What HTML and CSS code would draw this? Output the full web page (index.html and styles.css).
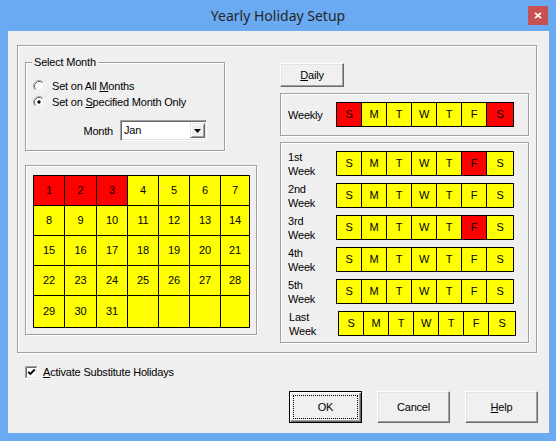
FILE: index.html
```html
<!DOCTYPE html>
<html>
<head>
<meta charset="utf-8">
<title>Yearly Holiday Setup</title>
<link rel="stylesheet" href="styles.css">
</head>
<body>
<div class="window">
  <div class="titlebar">
    <div class="spacer"></div>
    <div class="title">Yearly Holiday Setup</div>
    <div class="close-wrap">
      <div class="close">
        <svg width="8" height="7" viewBox="0 0 8 7"><path d="M1 0.8 L7 6.2 M7 0.8 L1 6.2" stroke="#fff" stroke-width="1.7" fill="none"/></svg>
      </div>
    </div>
  </div>
  <div class="client">
    <div class="frame etched">
      <div class="col-left">
        <div class="select-box etched">
          <div class="legend">Select Month</div>
          <div class="radio-row">
            <svg class="radio" width="12" height="12" viewBox="0 0 12 12">
              <circle cx="6" cy="6" r="5.5" fill="#fff"/>
              <path d="M2.11 9.89 A5.5 5.5 0 0 1 9.89 2.11" stroke="#a0a0a0" fill="none"/>
              <path d="M9.89 2.11 A5.5 5.5 0 0 1 2.11 9.89" stroke="#f4f4f4" fill="none"/>
              <path d="M2.82 9.18 A4.5 4.5 0 0 1 9.18 2.82" stroke="#696969" fill="none"/>
              <path d="M9.18 2.82 A4.5 4.5 0 0 1 2.82 9.18" stroke="#e3e3e3" fill="none"/>
            </svg>
            <span>Set on All <u>M</u>onths</span>
          </div>
          <div class="radio-row">
            <svg class="radio" width="12" height="12" viewBox="0 0 12 12">
              <circle cx="6" cy="6" r="5.5" fill="#fff"/>
              <path d="M2.11 9.89 A5.5 5.5 0 0 1 9.89 2.11" stroke="#a0a0a0" fill="none"/>
              <path d="M9.89 2.11 A5.5 5.5 0 0 1 2.11 9.89" stroke="#f4f4f4" fill="none"/>
              <path d="M2.82 9.18 A4.5 4.5 0 0 1 9.18 2.82" stroke="#696969" fill="none"/>
              <path d="M9.18 2.82 A4.5 4.5 0 0 1 2.82 9.18" stroke="#e3e3e3" fill="none"/>
              <circle cx="6" cy="6" r="1.7" fill="#000"/>
            </svg>
            <span>Set on <u>S</u>pecified Month Only</span>
          </div>
          <div class="month-row">
            <span class="month-label">Month</span>
            <div class="combo">
              <span class="combo-text">Jan</span>
              <div class="drop">
                <svg width="7" height="4" viewBox="0 0 7 4"><path d="M0 0 H7 L3.5 4 Z" fill="#000"/></svg>
              </div>
            </div>
          </div>
        </div>
        <div class="cal-box etched">
          <div class="cal">
            <div class="r">1</div><div class="r">2</div><div class="r">3</div><div>4</div><div>5</div><div>6</div><div>7</div>
            <div>8</div><div>9</div><div>10</div><div>11</div><div>12</div><div>13</div><div>14</div>
            <div>15</div><div>16</div><div>17</div><div>18</div><div>19</div><div>20</div><div>21</div>
            <div>22</div><div>23</div><div>24</div><div>25</div><div>26</div><div>27</div><div>28</div>
            <div>29</div><div>30</div><div>31</div><div></div><div></div><div></div><div></div>
          </div>
        </div>
      </div>
      <div class="col-right">
        <div class="btn daily"><span><u>D</u>aily</span></div>
        <div class="weekly-box etched">
          <span class="wlabel">Weekly</span>
          <div class="days">
            <div class="r">S</div><div>M</div><div>T</div><div>W</div><div>T</div><div>F</div><div class="r">S</div>
          </div>
        </div>
        <div class="weeks-box etched">
          <div class="week-row">
            <span class="wlabel">1st<br>Week</span>
            <div class="days"><div>S</div><div>M</div><div>T</div><div>W</div><div>T</div><div class="r">F</div><div>S</div></div>
          </div>
          <div class="week-row">
            <span class="wlabel">2nd<br>Week</span>
            <div class="days"><div>S</div><div>M</div><div>T</div><div>W</div><div>T</div><div>F</div><div>S</div></div>
          </div>
          <div class="week-row">
            <span class="wlabel">3rd<br>Week</span>
            <div class="days"><div>S</div><div>M</div><div>T</div><div>W</div><div>T</div><div class="r">F</div><div>S</div></div>
          </div>
          <div class="week-row">
            <span class="wlabel">4th<br>Week</span>
            <div class="days"><div>S</div><div>M</div><div>T</div><div>W</div><div>T</div><div>F</div><div>S</div></div>
          </div>
          <div class="week-row">
            <span class="wlabel">5th<br>Week</span>
            <div class="days"><div>S</div><div>M</div><div>T</div><div>W</div><div>T</div><div>F</div><div>S</div></div>
          </div>
          <div class="week-row last">
            <span class="wlabel">Last<br>Week</span>
            <div class="days"><div>S</div><div>M</div><div>T</div><div>W</div><div>T</div><div>F</div><div>S</div></div>
          </div>
        </div>
      </div>
    </div>
    <div class="check-row">
      <svg class="checkbox" width="13" height="13" viewBox="0 0 13 13">
        <rect x="0" y="0" width="13" height="13" fill="#fff"/>
        <path d="M0.5 12.5 V0.5 H12.5" stroke="#a0a0a0" fill="none"/>
        <path d="M1.5 11.5 V1.5 H11.5" stroke="#696969" fill="none"/>
        <path d="M0.5 12.5 H12.5 V0.5" stroke="#ffffff" fill="none"/>
        <path d="M1.5 11.5 H11.5 V1.5" stroke="#e3e3e3" fill="none"/>
        <path d="M3.2 5.8 L5.3 8 L9.8 3.5" stroke="#000" stroke-width="1.8" fill="none"/>
      </svg>
      <span><u>A</u>ctivate Substitute Holidays</span>
    </div>
    <div class="buttons">
      <div class="btn dlg default"><span class="focus">OK</span></div>
      <div class="btn dlg"><span>Cancel</span></div>
      <div class="btn dlg"><span><u>H</u>elp</span></div>
    </div>
  </div>
</div>
</body>
</html>
```

FILE: styles.css
```css
* {
  box-sizing: border-box;
}

html,
body {
  margin: 0;
  padding: 0;
}

body {
  width: 556px;
  height: 441px;
  overflow: hidden;
  background: #6aaaf2;
  font-family: "Liberation Sans", Arial, sans-serif;
}

.window {
  width: 556px;
  height: 441px;
  display: flex;
  flex-direction: column;
  background: #6aaaf2;
}

.titlebar {
  height: 31px;
  flex: none;
  display: grid;
  grid-template-columns: 1fr auto 1fr;
}

.title {
  font-family: "Noto Sans", sans-serif;
  font-size: 14px;
  color: #262626;
  line-height: 31px;
  white-space: nowrap;
}

.close-wrap {
  display: flex;
  justify-content: flex-end;
  align-items: flex-start;
  padding: 6px 8px 0 0;
}

.close {
  width: 20px;
  height: 19px;
  background: #c75050;
  display: flex;
  align-items: center;
  justify-content: center;
}

.close svg {
  display: block;
}

.client {
  flex: 1;
  margin: 0 7px 8px 8px;
  background-color: #f0f0f0;
  background-image: repeating-conic-gradient(#f5f5f5 0 25%, #eaeaea 0 50%);
  background-size: 2px 2px;
  background-attachment: fixed;
  padding: 14px 0 0 9px;
  font-size: 11px;
  letter-spacing: -0.2px;
  color: #000;
  display: flex;
  flex-direction: column;
}

.etched {
  border: 1px solid #a0a0a0;
  box-shadow: inset 1px 1px 0 #fff, 1px 1px 0 #fff;
}

.frame {
  width: 520px;
  height: 308px;
  display: flex;
  gap: 23px;
  padding: 16px 7px 0 7px;
}

.col-left {
  width: 232px;
  display: flex;
  flex-direction: column;
}

.select-box {
  width: 200px;
  height: 89px;
  display: flex;
  flex-direction: column;
  align-items: flex-start;
}

.legend {
  margin: -7px 0 0 6px;
  padding: 0 2px;
  line-height: 13px;
  background-color: #f0f0f0;
  background-image: repeating-conic-gradient(#f5f5f5 0 25%, #eaeaea 0 50%);
  background-size: 2px 2px;
  background-attachment: fixed;
}

.radio-row {
  height: 16px;
  display: flex;
  align-items: center;
  gap: 7px;
  padding-left: 7px;
  line-height: 13px;
}

.radio-row:first-of-type {
  margin-top: 0;
}

.legend + .radio-row {
  margin-top: 9px;
}

.radio {
  display: block;
  flex: none;
}

.month-row {
  margin-top: 10px;
  display: flex;
  align-items: center;
  gap: 7px;
  padding-left: 60px;
}

.month-label {
  width: 27px;
  text-align: right;
  white-space: nowrap;
  display: flex;
  justify-content: flex-end;
}

.combo {
  width: 87px;
  height: 21px;
  background: #fff;
  border-style: solid;
  border-width: 1px;
  border-color: #a0a0a0 #fff #fff #a0a0a0;
  box-shadow: inset 1px 1px 0 #696969, inset -1px -1px 0 #e3e3e3;
  display: flex;
  align-items: center;
  justify-content: space-between;
  padding: 2px 1px 2px 3px;
}

.combo-text {
  line-height: 13px;
}

.drop {
  width: 15px;
  height: 15px;
  background: #f0f0f0;
  border-style: solid;
  border-width: 1px;
  border-color: #e3e3e3 #696969 #696969 #e3e3e3;
  box-shadow: inset 1px 1px 0 #fff, inset -1px -1px 0 #a0a0a0;
  display: flex;
  align-items: center;
  justify-content: center;
}

.drop svg {
  display: block;
}

.cal-box {
  margin-top: 14px;
  width: 232px;
  height: 170px;
  padding: 9px 0 0 7px;
}

.cal {
  width: 217px;
  height: 153px;
  display: grid;
  grid-template-columns: 30px 31px 30px 30px 30px 30px 28px;
  grid-template-rows: 29px 29px 29px 29px 31px;
  gap: 1px;
  padding: 1px;
  background: #000;
}

.cal div,
.days div {
  background: #ffff00;
  display: flex;
  align-items: center;
  justify-content: center;
  line-height: 13px;
}

.cal .r,
.days .r {
  background: #ff0000;
}

.col-right {
  width: 249px;
  display: flex;
  flex-direction: column;
}

.btn {
  background: #f0f0f0;
  border-style: solid;
  border-width: 1px;
  border-color: #fff #696969 #696969 #fff;
  box-shadow: inset -1px -1px 0 #a0a0a0, inset 1px 1px 0 #e3e3e3;
  display: flex;
  align-items: center;
  justify-content: center;
  line-height: 13px;
}

.daily {
  margin-top: 1px;
  width: 64px;
  height: 24px;
}

.weekly-box {
  margin-top: 6px;
  width: 249px;
  height: 43px;
  display: flex;
  align-items: center;
  padding-left: 7px;
}

.wlabel {
  width: 48px;
  flex: none;
  line-height: 14px;
}

.days {
  width: 178px;
  height: 25px;
  display: grid;
  grid-template-columns: repeat(6, 24px) 26px;
  grid-template-rows: 23px;
  gap: 1px;
  padding: 1px;
  background: #000;
}

.weeks-box {
  margin-top: 6px;
  width: 249px;
  height: 201px;
  padding: 8px 0 0 7px;
  display: flex;
  flex-direction: column;
  gap: 7px;
}

.week-row {
  height: 25px;
  display: flex;
  align-items: center;
}

.week-row.last .wlabel {
  width: 50px;
  padding-left: 1px;
}

.check-row {
  margin-top: 13px;
  padding-left: 8px;
  height: 13px;
  display: flex;
  align-items: center;
  gap: 5px;
  line-height: 13px;
}

.checkbox {
  display: block;
  flex: none;
}

.buttons {
  margin-top: 12px;
  display: flex;
  justify-content: flex-end;
  gap: 15px;
  padding-right: 11px;
}

.dlg {
  width: 73px;
  height: 32px;
}

.dlg.default {
  border-color: #000;
  box-shadow: inset 1px 1px 0 #fff, inset -1px -1px 0 #696969, inset -2px -2px 0 #a0a0a0;
  padding: 3px;
}

.focus {
  flex: 1;
  align-self: stretch;
  border: 1px dotted #000;
  display: flex;
  align-items: center;
  justify-content: center;
}
```
